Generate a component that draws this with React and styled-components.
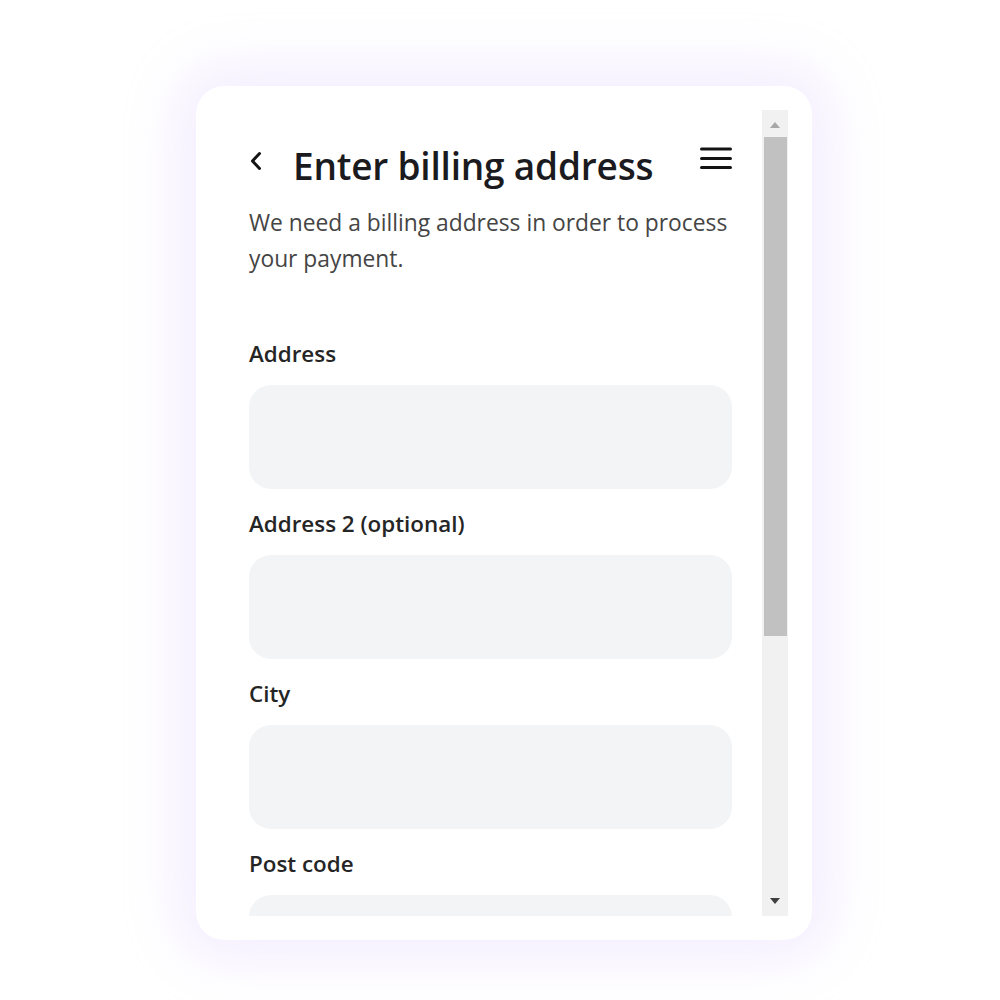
import React, { useState } from "react";
import styled, { createGlobalStyle } from "styled-components";

const GlobalStyle = createGlobalStyle`
  html, body {
    margin: 0;
    padding: 0;
    background: #ffffff;
  }
  body {
    font-family: "Open Sans", "Noto Sans", "DejaVu Sans", sans-serif;
    -webkit-font-smoothing: antialiased;
  }
  * {
    box-sizing: border-box;
  }
`;

const Page = styled.div`
  min-height: 1000px;
  display: flex;
  justify-content: center;
  align-items: flex-start;
  padding-top: 86px;
`;

const Card = styled.div`
  width: 616px;
  height: 854px;
  margin-left: 8px;
  background: #ffffff;
  border-radius: 28px;
  padding: 24px;
  display: flex;
  box-shadow: 0 0 55px 18px rgba(206, 178, 255, 0.24);
`;

const Scroller = styled.div`
  flex: 1;
  min-width: 0;
  height: 100%;
  overflow-y: auto;
  scrollbar-width: none;
  padding: 31px 30px 0 29px;

  &::-webkit-scrollbar {
    display: none;
  }
`;

// hand drawn scrollbar, headless browsers hide the native one
const Track = styled.div`
  width: 26px;
  height: 100%;
  flex-shrink: 0;
  background: #f1f1f1;
  display: flex;
  flex-direction: column;
  align-items: center;
`;

const ArrowBtn = styled.div`
  height: ${(p) => (p.$down ? 26 : 27)}px;
  width: 100%;
  display: flex;
  align-items: center;
  justify-content: center;
  margin-top: ${(p) => (p.$down ? "auto" : 0)};

  &::before {
    content: "";
    width: 0;
    height: 0;
    border-left: 5px solid transparent;
    border-right: 5px solid transparent;
    ${(p) =>
      p.$down
        ? "border-top: 6px solid #3f3f3f; margin-bottom: 4px;"
        : "border-bottom: 6px solid #a8a8a8; margin-top: 2px;"}
  }
`;

const Thumb = styled.div`
  width: 23px;
  height: 499px;
  background: #c1c1c1;
`;

const Header = styled.div`
  display: flex;
  align-items: flex-start;
`;

const IconButton = styled.button`
  border: 0;
  background: transparent;
  padding: 0;
  cursor: pointer;
  display: flex;
  align-items: center;
  justify-content: center;
  color: #141414;
  margin-top: ${(p) => p.$top || 0}px;
`;

const Title = styled.h1`
  flex: 1;
  margin: 1px 0 0 30px;
  font-size: 37px;
  line-height: 48px;
  font-weight: 600;
  color: #1b1b1f;
  letter-spacing: -0.2px;
`;

const Description = styled.p`
  margin: 15px 0 0;
  font-size: 22.8px;
  line-height: 36px;
  color: #454545;
`;

const Form = styled.form`
  margin-top: 59px;
  display: flex;
  flex-direction: column;
`;

const Field = styled.label`
  display: flex;
  flex-direction: column;
  margin-bottom: 17px;
`;

const Label = styled.span`
  font-size: 22.4px;
  line-height: 36px;
  font-weight: 600;
  color: #252525;
  margin-bottom: 13px;
`;

const Input = styled.input`
  width: 100%;
  height: 104px;
  border: 0;
  outline: 0;
  border-radius: 22px;
  background: #f3f4f6;
  padding: 0 22px;
  font-family: inherit;
  font-size: 22px;
  color: #252525;
`;

const ChevronLeft = () => (
  <svg width="14" height="20" viewBox="0 0 14 20" fill="none">
    <path
      d="M10.5 2.5L3.5 10l7 7.5"
      stroke="currentColor"
      strokeWidth="3"
      strokeLinecap="round"
      strokeLinejoin="round"
    />
  </svg>
);

const Menu = () => (
  <svg width="32" height="24" viewBox="0 0 32 24" fill="none">
    <path
      d="M1.5 3h29M1.5 12.5h29M1.5 21.5h29"
      stroke="currentColor"
      strokeWidth="3"
      strokeLinecap="round"
    />
  </svg>
);

const fields = [
  { name: "address", label: "Address" },
  { name: "address2", label: "Address 2 (optional)" },
  { name: "city", label: "City" },
  { name: "postcode", label: "Post code" },
];

export default function App() {
  const [values, setValues] = useState({});

  const handleChange = (e) => {
    setValues({ ...values, [e.target.name]: e.target.value });
  };

  return (
    <>
      <GlobalStyle />
      <Page>
        <Card>
          <Scroller>
            <Header>
              <IconButton type="button" aria-label="Back" $top={10}>
                <ChevronLeft />
              </IconButton>
              <Title>Enter billing address</Title>
              <IconButton type="button" aria-label="Menu" $top={5}>
                <Menu />
              </IconButton>
            </Header>
            <Description>
              We need a billing address in order to process your payment.
            </Description>
            <Form onSubmit={(e) => e.preventDefault()}>
              {fields.map((f) => (
                <Field key={f.name}>
                  <Label>{f.label}</Label>
                  <Input
                    name={f.name}
                    value={values[f.name] || ""}
                    onChange={handleChange}
                  />
                </Field>
              ))}
            </Form>
          </Scroller>
          <Track aria-hidden="true">
            <ArrowBtn />
            <Thumb />
            <ArrowBtn $down />
          </Track>
        </Card>
      </Page>
    </>
  );
}
